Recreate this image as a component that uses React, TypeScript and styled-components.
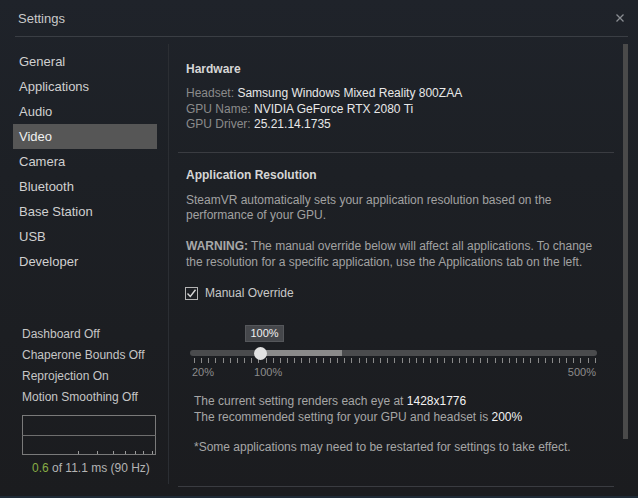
import React from "react";
import styled, { createGlobalStyle } from "styled-components";

const Global = createGlobalStyle`
  html, body { margin: 0; padding: 0; background: #1b1c1f; }
  body { font-family: "Liberation Sans", Arial, sans-serif; }
  * { box-sizing: border-box; }
`;

const Window = styled.div`
  width: 638px;
  height: 498px;
  overflow: hidden;
  display: flex;
  flex-direction: column;
  background: linear-gradient(180deg, #1f232a 0%, #1d2025 35%, #1b1c1f 100%);
  border-bottom: 2px solid #1f2b37;
  font-family: "Liberation Sans", Arial, sans-serif;
`;

const Header = styled.div`
  height: 37px;
  margin: 0 10px 0 15px;
  padding-left: 3px;
  padding-top: 1px;
  display: flex;
  align-items: center;
  justify-content: space-between;
  border-bottom: 1px solid #3a3e44;
`;

const Title = styled.div`
  font-size: 13px;
  color: #c9c9c9;
`;

const CloseButton = styled.div`
  width: 8px;
  height: 8px;
  margin-right: 4px;
  margin-top: -2px;
  display: flex;
`;

const Body = styled.div`
  flex: 1;
  display: flex;
  min-height: 0;
  padding-top: 7px;
`;

const Sidebar = styled.div`
  width: 169px;
  flex: none;
  display: flex;
  flex-direction: column;
  border-right: 1px solid #2b2e33;
  margin-bottom: 12px;
  padding-top: 5px;
`;

const NavItem = styled.div<{ $active?: boolean }>`
  margin-left: 13px;
  width: 144px;
  height: 25px;
  line-height: 25px;
  padding-left: 6px;
  font-size: 13px;
  color: ${(p) => (p.$active ? "#f0f0f0" : "#d0d0d0")};
  background: ${(p) => (p.$active ? "#565656" : "transparent")};
`;

const Status = styled.div`
  margin-top: auto;
  padding-left: 22px;
  padding-bottom: 9px;
`;

const StatusLine = styled.div`
  font-size: 12px;
  line-height: 21px;
  color: #c6c6c6;
`;

const Graph = styled.div`
  margin-top: 7px;
  width: 134px;
  height: 40px;
  display: flex;
`;

const GraphLabel = styled.div`
  margin-top: 6px;
  padding-left: 10px;
  font-size: 12px;
  line-height: 14px;
  color: #b4b4b4;
`;

const Green = styled.span`
  color: #88ad45;
`;

const Content = styled.div`
  flex: 1;
  display: flex;
  min-width: 0;
`;

const Sections = styled.div`
  margin-left: 9px;
  width: 436px;
  flex: none;
`;

const Section = styled.div<{ $top: number; $bottom: number }>`
  padding: ${(p) => p.$top}px 8px ${(p) => p.$bottom}px 8px;
  border-bottom: 1px solid #3a3c41;
`;

const SectionTitle = styled.div`
  font-size: 12px;
  line-height: 14px;
  font-weight: bold;
  color: #d6d6d6;
`;

const InfoList = styled.div`
  margin-top: 10px;
`;

const InfoLine = styled.div`
  font-size: 12px;
  line-height: 15.5px;
  color: #8b8b8b;
`;

const Value = styled.span`
  color: #e8e8e8;
`;

const Paragraph = styled.p<{ $mt: number }>`
  margin: ${(p) => p.$mt}px 0 0 0;
  font-size: 12px;
  line-height: 15.5px;
  color: #a2a2a2;
`;

const Strong = styled.b`
  color: #a8a8a8;
`;

const CheckRow = styled.label`
  margin-top: 15px;
  display: flex;
  align-items: center;
  height: 16px;
  font-size: 12px;
  color: #c8c8c8;
  gap: 7px;
  margin-left: -1px;
`;

const CheckBox = styled.span`
  width: 13px;
  height: 13px;
  border: 1px solid #b4b4b4;
  display: flex;
  align-items: center;
  justify-content: center;
`;

const Slider = styled.div`
  position: relative;
  margin: 23px 0 0 4px;
  width: 407px;
  padding-top: 26px;
`;

const Tooltip = styled.div`
  position: absolute;
  top: 1px;
  width: 39px;
  height: 17px;
  margin-left: -15px;
  background: #45474b;
  border: 1px solid #55575b;
  color: #f0f0f0;
  font-size: 11px;
  line-height: 15px;
  text-align: center;
`;

const Track = styled.div`
  position: relative;
  height: 6px;
  border-radius: 3px;
  background: #4a4b4d;
`;

const Fill = styled.div`
  position: absolute;
  top: 0;
  bottom: 0;
  background: #8a8a8a;
`;

const Thumb = styled.div`
  position: absolute;
  top: -3.5px;
  width: 13px;
  height: 13px;
  margin-left: -6.5px;
  border-radius: 50%;
  background: #e2e2e2;
`;

const Ticks = styled.div`
  margin-top: 2px;
  height: 5px;
  padding: 0 1px 0 4px;
  display: flex;
  justify-content: space-between;
`;

const Tick = styled.span`
  width: 1px;
  height: 5px;
  background: #8a8a8a;
`;

const ScaleLabels = styled.div`
  margin-top: 3px;
  display: flex;
  font-size: 11px;
  line-height: 12px;
  color: #8c8c8c;
  padding: 0 1px 0 2px;
`;

const ScaleEnd = styled.span`
  margin-left: auto;
`;

const Result = styled.div`
  margin-top: 16px;
  padding-left: 8px;
`;

const ResultLine = styled.div<{ $mt?: number }>`
  margin-top: ${(p) => p.$mt ?? 0}px;
  font-size: 12px;
  line-height: 15.5px;
  color: #a6a6a6;
`;

const Bright = styled.span`
  color: #f2f2f2;
`;

const Scrollbar = styled.div`
  margin-left: 9px;
  width: 5px;
  height: 395px;
  background: #4a4a4a;
  flex: none;
`;

const navItems = [
  "General",
  "Applications",
  "Audio",
  "Video",
  "Camera",
  "Bluetooth",
  "Base Station",
  "USB",
  "Developer",
];

const statusLines = [
  "Dashboard Off",
  "Chaperone Bounds Off",
  "Reprojection On",
  "Motion Smoothing Off",
];

const graphBars = [56, 75, 91, 103, 113, 121, 130];

export default function App() {
  const min = 20;
  const max = 500;
  const value = 100;
  const recommended = 200;
  const usable = 402;
  const offset = 4;
  const pos = (v: number) => offset + ((v - min) / (max - min)) * usable;
  const thumbX = pos(value) - 1;
  const recX = pos(recommended) - 3;
  const ticks = Array.from({ length: 57 });

  return (
    <>
      <Global />
      <Window>
        <Header>
          <Title>Settings</Title>
          <CloseButton>
            <svg width="8" height="8" viewBox="0 0 8 8">
              <path d="M0.5 0.5 L7.5 7.5 M7.5 0.5 L0.5 7.5" stroke="#8a8d92" strokeWidth="1.3" />
            </svg>
          </CloseButton>
        </Header>
        <Body>
          <Sidebar>
            {navItems.map((n) => (
              <NavItem key={n} $active={n === "Video"}>
                {n}
              </NavItem>
            ))}
            <Status>
              {statusLines.map((s) => (
                <StatusLine key={s}>{s}</StatusLine>
              ))}
              <Graph>
                <svg width="134" height="40" viewBox="0 0 134 40">
                  <rect x="0.5" y="0.5" width="133" height="39" fill="none" stroke="#7a7a7a" />
                  <line x1="0" y1="20.5" x2="134" y2="20.5" stroke="#6e6e6e" />
                  {graphBars.map((x) => (
                    <rect key={x} x={x} y="36" width="1" height="3" fill="#9a9a9a" />
                  ))}
                </svg>
              </Graph>
              <GraphLabel>
                <Green>0.6</Green> of 11.1 ms (90 Hz)
              </GraphLabel>
            </Status>
          </Sidebar>
          <Content>
            <Sections>
              <Section $top={18} $bottom={19.5}>
                <SectionTitle>Hardware</SectionTitle>
                <InfoList>
                  <InfoLine>
                    Headset: <Value>Samsung Windows Mixed Reality 800ZAA</Value>
                  </InfoLine>
                  <InfoLine>
                    GPU Name: <Value>NVIDIA GeForce RTX 2080 Ti</Value>
                  </InfoLine>
                  <InfoLine>
                    GPU Driver: <Value>25.21.14.1735</Value>
                  </InfoLine>
                </InfoList>
              </Section>
              <Section $top={15} $bottom={30}>
                <SectionTitle>Application Resolution</SectionTitle>
                <Paragraph $mt={10.5}>
                  SteamVR automatically sets your application resolution based on the performance of your GPU.
                </Paragraph>
                <Paragraph $mt={15.5}>
                  <Strong>WARNING:</Strong> The manual override below will affect all applications. To change
                  the resolution for a specific application, use the Applications tab on the left.
                </Paragraph>
                <CheckRow>
                  <CheckBox>
                    <svg width="11" height="11" viewBox="0 0 11 11">
                      <path d="M1.5 5.5 L4.3 8.5 L9.5 1.8" fill="none" stroke="#d8d8d8" strokeWidth="1.4" />
                    </svg>
                  </CheckBox>
                  Manual Override
                </CheckRow>
                <Slider>
                  <Tooltip style={{ left: thumbX }}>100%</Tooltip>
                  <Track>
                    <Fill style={{ left: thumbX, width: recX - thumbX }} />
                    <Thumb style={{ left: thumbX }} />
                  </Track>
                  <Ticks>
                    {ticks.map((_, i) => (
                      <Tick key={i} />
                    ))}
                  </Ticks>
                  <ScaleLabels>
                    <span>20%</span>
                    <span style={{ marginLeft: pos(value) - 31 }}>100%</span>
                    <ScaleEnd>500%</ScaleEnd>
                  </ScaleLabels>
                </Slider>
                <Result>
                  <ResultLine>
                    The current setting renders each eye at <Bright>1428x1776</Bright>
                  </ResultLine>
                  <ResultLine>
                    The recommended setting for your GPU and headset is <Bright>200%</Bright>
                  </ResultLine>
                  <ResultLine $mt={15}>
                    *Some applications may need to be restarted for settings to take effect.
                  </ResultLine>
                </Result>
              </Section>
            </Sections>
            <Scrollbar />
          </Content>
        </Body>
      </Window>
    </>
  );
}
